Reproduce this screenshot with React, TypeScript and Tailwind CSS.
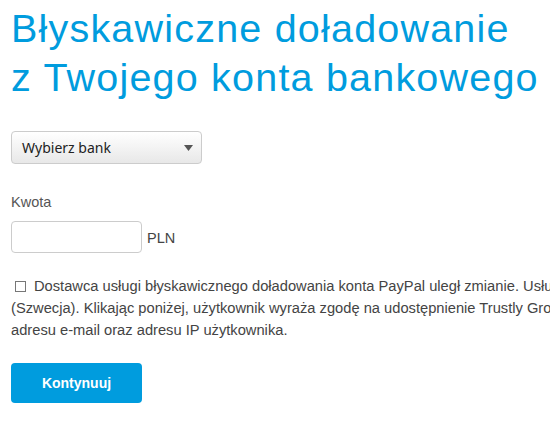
import React from 'react';

export default function App() {
  return (
    <div className="w-[550px] h-[431px] overflow-hidden bg-white font-['Liberation_Sans',Arial,sans-serif]">
      <div className="w-[800px] pl-[11px] pt-[4px]">
        <h1 className="text-[39.5px] leading-[49px] tracking-[1.2px] text-[#009cde] font-normal">
          Błyskawiczne doładowanie
          <br />
          z Twojego konta bankowego
        </h1>

        <div className="mt-[29px] w-[191px] h-[33px] flex items-center justify-between pl-[10px] pr-[8px] border border-[#ccc] rounded-[4px] bg-gradient-to-b from-white to-[#e8e8e8]">
          <span className="font-['Noto_Sans',sans-serif] text-[14px] text-[#222]">Wybierz bank</span>
          <svg width="9" height="6" viewBox="0 0 9 6">
            <path d="M0 0h9L4.5 6z" fill="#555" />
          </svg>
        </div>

        <div className="mt-[30px] text-[14.5px] text-[#555] leading-[16px]">Kwota</div>
        <div className="mt-[11px] flex items-center gap-[5px]">
          <input type="text" className="w-[131px] h-[32px] border border-[#ccc] rounded-[4px] bg-white outline-none px-2" />
          <span className="text-[14.5px] text-[#444] mt-[4px]">PLN</span>
        </div>

        <div className="mt-[22px] pl-[4px] text-[14.7px] leading-[22px] text-[#444]">
          <span className="inline-block w-[11px] h-[11px] border border-[#777] bg-white align-[-1px] mr-[8px]" />
          Dostawca usługi błyskawicznego doładowania konta PayPal uległ zmianie. Usługę świadczy teraz Trustly Group AB
          <br />
          <span className="-ml-[4px]">(Szwecja). Klikając poniżej, użytkownik wyraża zgodę na udostępnienie Trustly Group AB swojego imienia i nazwiska,</span>
          <br />
          <span className="-ml-[4px]">adresu e-mail oraz adresu IP użytkownika.</span>
        </div>

        <button className="mt-[22px] w-[131px] h-[40px] rounded-[4px] bg-[#009cde] text-white text-[14px] font-bold">
          Kontynuuj
        </button>
      </div>
    </div>
  );
}
